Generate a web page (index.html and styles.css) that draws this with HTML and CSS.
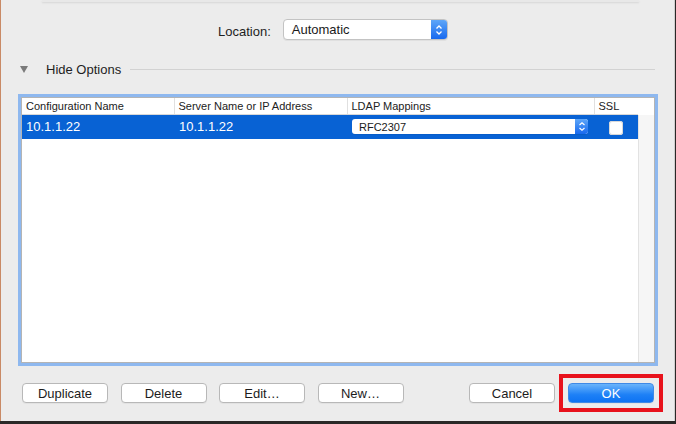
FILE: index.html
```html
<!DOCTYPE html>
<html lang="en">
<head>
    <meta charset="UTF-8">
    <meta name="viewport" content="width=device-width, initial-scale=1.0">
    <title>LDAP Configuration</title>
    <link rel="stylesheet" href="styles.css">
</head>
<body>
    <div class="window">
        <div class="sheet-edge"></div>

        <div class="location">
            <span class="label">Location:</span>
            <div class="popup">
                <span class="popup-text">Automatic</span>
                <span class="stepper">
                    <svg width="8" height="12" viewBox="0 0 8 12"><path d="M1.5 4.5 L4 2 L6.5 4.5 M1.5 7.5 L4 10 L6.5 7.5" fill="none" stroke="#fff" stroke-width="1.3"/></svg>
                </span>
            </div>
        </div>

        <div class="disclosure">
            <span class="triangle"></span>
            <span class="disclosure-text">Hide Options</span>
            <span class="rule"></span>
        </div>

        <div class="table-frame">
            <div class="table-main">
                <table class="servers">
                    <thead>
                        <tr>
                            <th class="c1">Configuration Name</th>
                            <th class="c2">Server Name or IP Address</th>
                            <th class="c3">LDAP Mappings</th>
                            <th class="c4">SSL</th>
                        </tr>
                    </thead>
                    <tbody>
                        <tr class="selected">
                            <td>10.1.1.22</td>
                            <td>10.1.1.22</td>
                            <td>
                                <div class="popup small">
                                    <span class="popup-text">RFC2307</span>
                                    <span class="stepper">
                                        <svg width="8" height="11" viewBox="0 0 8 11"><path d="M1.5 4 L4 1.8 L6.5 4 M1.5 7 L4 9.2 L6.5 7" fill="none" stroke="#fff" stroke-width="1.2"/></svg>
                                    </span>
                                </div>
                            </td>
                            <td class="check-cell"><span class="checkbox"></span></td>
                        </tr>
                    </tbody>
                </table>
            </div>
            <div class="filler"></div>
        </div>

        <div class="actions">
            <div class="left-buttons">
                <button class="btn">Duplicate</button>
                <button class="btn">Delete</button>
                <button class="btn">Edit…</button>
                <button class="btn">New…</button>
            </div>
            <div class="right-buttons">
                <button class="btn">Cancel</button>
                <span class="highlight">
                    <button class="btn primary">OK</button>
                </span>
            </div>
        </div>
    </div>
</body>
</html>
```

FILE: styles.css
```css
* {
    margin: 0;
    padding: 0;
    box-sizing: border-box;
    font-family: "Liberation Sans", Arial, sans-serif;
}
body {
    width: 676px;
    height: 424px;
    background-color: #2a2827;
    overflow: hidden;
}
.window {
    width: 675px;
    height: 421px;
    background-color: #ececec;
    border-left: 1px solid #c98a66;
    border-right: 1px solid #cfcfcf;
    display: flex;
    flex-direction: column;
}
.sheet-edge {
    height: 2px;
    margin: 0 35px 0 41px;
    background-color: #e8e8e8;
    box-shadow: 0 1px 2px rgba(0, 0, 0, 0.1);
}

/* location row */
.location {
    margin-top: 17px;
    height: 21px;
    display: flex;
    align-items: center;
    padding-left: 217px;
}
.label {
    font-size: 13px;
    color: #1e1e1e;
    margin-right: 12px;
    margin-top: 3px;
}
.popup {
    width: 165px;
    height: 21px;
    background-color: #fff;
    border: 1px solid #c3c3c3;
    border-radius: 4px;
    display: flex;
    align-items: center;
    box-shadow: 0 1px 0 rgba(0, 0, 0, 0.05);
    overflow: hidden;
}
.popup-text {
    flex: 1;
    font-size: 13px;
    color: #1a1a1a;
    padding-left: 8px;
}
.stepper {
    width: 16px;
    height: 100%;
    display: flex;
    align-items: center;
    justify-content: center;
    background: linear-gradient(#5ea6f8, #1769ef);
}
.popup.small {
    width: 236px;
    height: 15px;
    border: none;
    border-radius: 3px;
}
.popup.small .popup-text {
    font-size: 11px;
    padding-left: 7px;
}
.popup.small .stepper {
    width: 13px;
}

/* disclosure */
.disclosure {
    margin-top: 21px;
    height: 16px;
    display: flex;
    align-items: center;
    padding-left: 19px;
}
.triangle {
    width: 0;
    height: 0;
    border-left: 4px solid transparent;
    border-right: 4px solid transparent;
    border-top: 7px solid #7a7a7a;
}
.disclosure-text {
    font-size: 13px;
    color: #1e1e1e;
    margin-left: 18px;
}
.rule {
    flex: 1;
    height: 1px;
    background-color: #d2d2d2;
    margin: 0 19px 0 9px;
}

/* table */
.table-frame {
    margin-top: 20px;
    margin-left: 20px;
    width: 634px;
    height: 266px;
    border: 1px solid #b4b4b4;
    background-color: #fff;
    box-shadow: 0 0 0 3px #8eb8ef;
    display: flex;
}
.table-main {
    width: 616px;
}
.servers {
    width: 616px;
    border-collapse: collapse;
    table-layout: fixed;
}
.servers th {
    height: 16px;
    font-size: 11px;
    font-weight: normal;
    color: #222;
    text-align: left;
    padding-left: 4px;
    border-bottom: 1px solid #d8d8d8;
    background-color: #fff;
}
.servers th + th {
    border-left: 1px solid #e0e0e0;
}
.c1 { width: 152px; }
.c2 { width: 173px; }
.c3 { width: 247px; }
.c4 { width: 44px; }
.servers td {
    height: 25px;
    font-size: 13px;
    padding-left: 4px;
}
.servers td + td {
    padding-left: 5px;
}
.selected {
    background-color: #0862d4;
    color: #fff;
}
.check-cell {
    text-align: center;
}
.servers td.check-cell {
    padding-left: 0;
}
.checkbox {
    display: inline-block;
    width: 14px;
    height: 14px;
    background-color: #fff;
    border-radius: 3px;
    vertical-align: middle;
    box-shadow: inset 0 0 0 1px #d8d8d8;
}
.filler {
    flex: 1;
    background-color: #f6f6f6;
    border-left: 1px solid #e2e2e2;
    margin-top: 17px;
}

/* buttons */
.actions {
    margin-top: 20px;
    height: 20px;
    display: flex;
    justify-content: space-between;
    padding: 0 20px 0 21px;
}
.left-buttons, .right-buttons {
    display: flex;
    gap: 12.5px;
}
.right-buttons {
    gap: 13px;
}
.btn {
    width: 86px;
    height: 20px;
    font-size: 13px;
    color: #1c1c1c;
    background-color: #fff;
    border: 1px solid #b8b8b8;
    border-radius: 4px;
    box-shadow: 0 1px 0 rgba(0, 0, 0, 0.04);
}
.btn.primary {
    color: #fff;
    border-color: #3f8ae6;
    background: linear-gradient(#6ab4fb, #1d80f6 60%, #0e73f3);
}
.highlight {
    position: relative;
    display: block;
}
.highlight::after {
    content: "";
    position: absolute;
    left: -9px;
    right: -9px;
    top: -9px;
    bottom: -9px;
    border: 4px solid #e8121c;
}
```
